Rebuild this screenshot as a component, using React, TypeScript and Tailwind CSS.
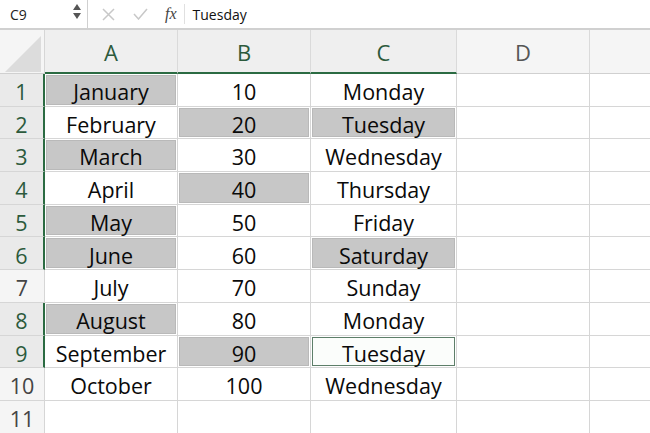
import React from "react";

type Row = { n: number; a: string; b: string; c: string; sa?: boolean; sb?: boolean; sc?: boolean; active?: boolean; hl: boolean };

const rows: Row[] = [
  { n: 1, a: "January", b: "10", c: "Monday", sa: true, hl: true },
  { n: 2, a: "February", b: "20", c: "Tuesday", sb: true, sc: true, hl: true },
  { n: 3, a: "March", b: "30", c: "Wednesday", sa: true, hl: true },
  { n: 4, a: "April", b: "40", c: "Thursday", sb: true, hl: true },
  { n: 5, a: "May", b: "50", c: "Friday", sa: true, hl: true },
  { n: 6, a: "June", b: "60", c: "Saturday", sa: true, sc: true, hl: true },
  { n: 7, a: "July", b: "70", c: "Sunday", hl: false },
  { n: 8, a: "August", b: "80", c: "Monday", sa: true, hl: true },
  { n: 9, a: "September", b: "90", c: "Tuesday", sb: true, active: true, hl: true },
  { n: 10, a: "October", b: "100", c: "Wednesday", hl: false },
  { n: 11, a: "", b: "", c: "", hl: false },
];

const font = { fontFamily: '"Open Sans", "Noto Sans", sans-serif' };

function Cell({ text, sel, active, w }: { text: string; sel?: boolean; active?: boolean; w: string }) {
  return (
    <div className={`${w} h-full shrink-0 border-r border-b border-[#d6d6d6] relative flex items-center justify-center`}>
      {sel && <div className="absolute inset-[1px] bg-[#c7c7c7] border border-[#b9b9b9]" />}
      {active && <div className="absolute inset-[1px] bg-[#fbfdfb] border-[1.5px] border-[#5d7e69]" />}
      <span className="relative text-[21.5px] text-[#0a0a0a] leading-none pt-[4px]" style={font}>{text}</span>
    </div>
  );
}

export default function App() {
  return (
    <div className="w-[650px] h-[433px] overflow-hidden bg-white" style={{ fontFamily: '"Open Sans", sans-serif' }}>
      {/* formula bar */}
      <div className="h-[30px] flex items-center border-b-2 border-[#d0d0d0] bg-white">
        <div className="w-[88px] h-full flex items-center border-r border-[#d0d0d0] relative">
          <span className="ml-[10px] text-[14px] text-[#222]">C9</span>
          <div className="absolute right-[6px] top-[4px] flex flex-col items-center gap-[3px]">
            <svg width="8" height="6" viewBox="0 0 8 6"><path d="M4 0 L8 6 L0 6 Z" fill="#555" /></svg>
            <svg width="8" height="6" viewBox="0 0 8 6"><path d="M0 0 L8 0 L4 6 Z" fill="#555" /></svg>
          </div>
        </div>
        <div className="flex items-center h-full">
          <svg className="ml-[14px]" width="13" height="13" viewBox="0 0 13 13"><path d="M1 1 L12 12 M12 1 L1 12" stroke="#c8c8c8" strokeWidth="1.5" /></svg>
          <svg className="ml-[18px]" width="15" height="12" viewBox="0 0 15 12"><path d="M1 6 L5.5 11 L14 1" stroke="#c8c8c8" strokeWidth="1.5" fill="none" /></svg>
          <span className="ml-[17px] text-[16px] italic text-[#444]" style={{ fontFamily: '"Liberation Serif", serif' }}>fx</span>
          <div className="ml-[7px] w-px h-[20px] bg-[#e0e0e0]" />
          <span className="ml-[8px] text-[14px] text-[#111]">Tuesday</span>
        </div>
      </div>
      {/* header row */}
      <div className="h-[44px] flex bg-[#f5f5f5]">
        <div className="w-[45px] h-full shrink-0 border-r border-[#d6d6d6] border-b border-b-[#d0d0d0] relative">
          <svg className="absolute left-[5px] top-[6px]" width="36" height="36" viewBox="0 0 36 36"><path d="M36 0 L36 36 L0 36 Z" fill="#dcdcdc" /></svg>
        </div>
        {["A", "B", "C"].map((l, i) => (
          <div key={l} className={`${i === 2 ? "w-[146px]" : "w-[133px]"} h-full shrink-0 border-r border-[#dadada] border-b-2 border-b-[#2b6b42] bg-[#efefef] flex items-center justify-center`}>
            <span className="text-[22px] text-[#2c5a3c] pt-[3px]" style={font}>{l}</span>
          </div>
        ))}
        <div className="w-[133px] h-full shrink-0 border-r border-[#dadada] border-b border-b-[#d0d0d0] flex items-center justify-center">
          <span className="text-[22px] text-[#555] pt-[2px]" style={font}>D</span>
        </div>
        <div className="flex-1 h-full border-b border-b-[#d0d0d0]" />
      </div>
      {/* body */}
      {rows.map((r) => (
        <div key={r.n} className="h-[32.7px] flex">
          <div className={`w-[45px] h-full shrink-0 border-b border-[#d6d6d6] flex items-center justify-center ${r.hl ? "bg-[#eaeaea] border-r-2 border-r-[#2b6b42]" : "bg-[#f5f5f5] border-r border-r-[#d6d6d6]"}`}>
            <span className={`text-[21.5px] leading-none pt-[4px] ${r.hl ? "text-[#2c5a3c]" : "text-[#444]"}`} style={font}>{r.n}</span>
          </div>
          <Cell w="w-[133px]" text={r.a} sel={r.sa} />
          <Cell w="w-[133px]" text={r.b} sel={r.sb} />
          <Cell w="w-[146px]" text={r.c} sel={r.sc} active={r.active} />
          <Cell w="w-[133px]" text="" />
          <div className="flex-1 h-full border-b border-[#d6d6d6]" />
        </div>
      ))}
    </div>
  );
}
